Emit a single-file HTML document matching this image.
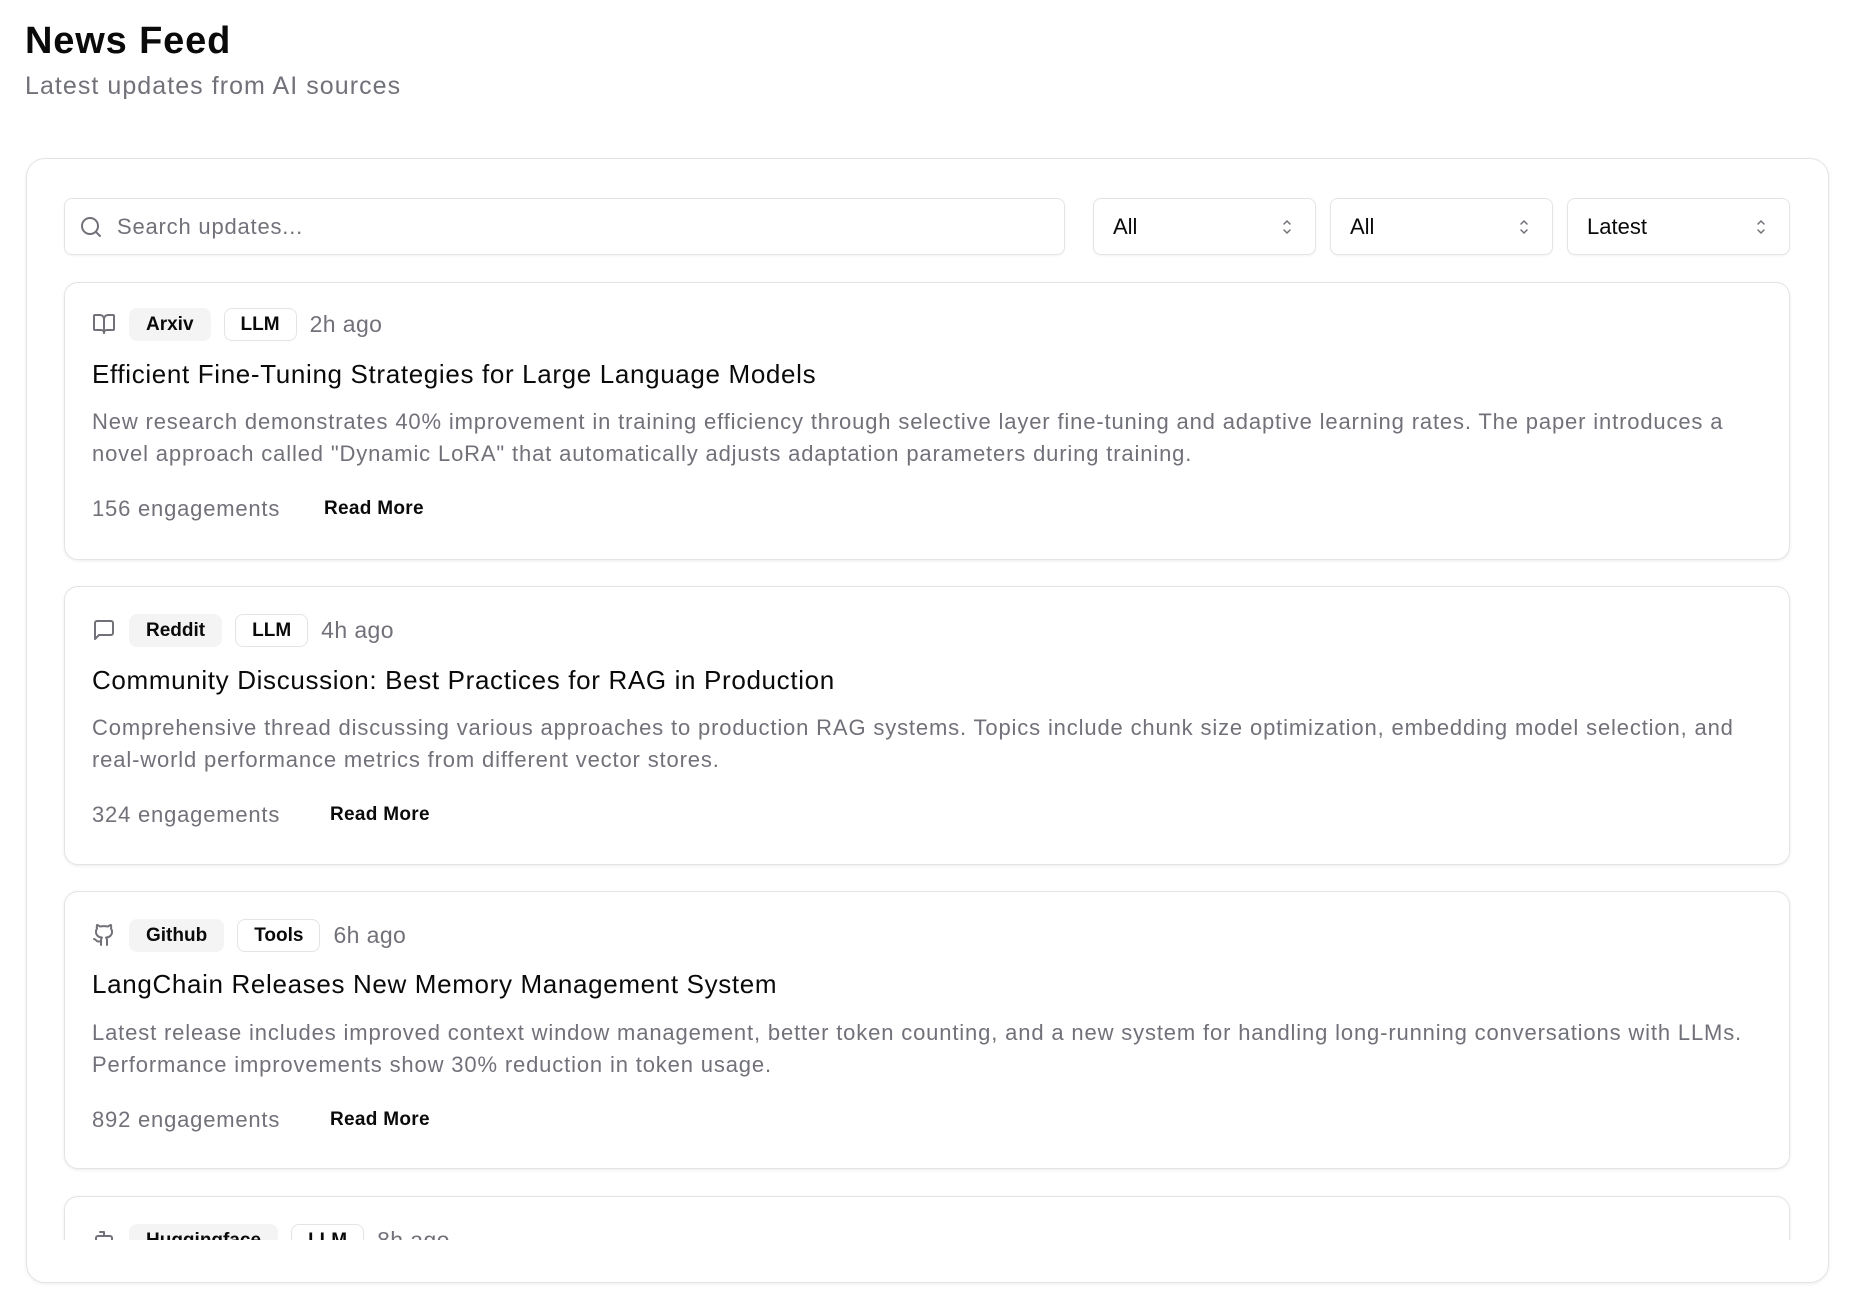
<!DOCTYPE html>
<html><head><meta charset="utf-8"><style>
*{box-sizing:border-box;margin:0;padding:0}
html,body{width:1862px;height:1316px;overflow:hidden}
body{background:#fff;font-family:"Liberation Sans",Arial,sans-serif;color:#0a0a0a;position:relative}
.h1{position:absolute;left:25px;top:19px;font-size:38px;font-weight:bold;line-height:44px;letter-spacing:0.85px}
.sub{position:absolute;left:25px;top:72px;font-size:25px;line-height:28px;color:#71717a;letter-spacing:1.05px}
.outer{position:absolute;left:26px;top:158px;width:1803px;height:1125px;border:1px solid #e4e4e7;border-radius:19px;box-shadow:0 1px 3px rgba(0,0,0,.08)}
.search{position:absolute;left:64px;top:198px;width:1001px;height:57px;border:1px solid #e4e4e7;border-radius:8px;box-shadow:0 1px 2px rgba(0,0,0,.05)}
.search svg{position:absolute;left:14px;top:16px}
.search span{position:absolute;left:52px;top:15px;font-size:22px;line-height:26px;color:#71717a;letter-spacing:0.8px}
.sel{position:absolute;top:198px;width:223px;height:57px;border:1px solid #e4e4e7;border-radius:8px;box-shadow:0 1px 2px rgba(0,0,0,.05)}
.sel span{position:absolute;left:19px;top:15px;font-size:22px;line-height:26px}
.sel svg{position:absolute;right:22px;top:19px}
.clip{position:absolute;left:60px;top:278px;width:1740px;height:962px;overflow:hidden}
.card{position:absolute;left:4px;width:1726px;height:278px;border:1px solid #e4e4e7;border-radius:14px;box-shadow:0 1px 3px rgba(0,0,0,.08);background:#fff}
.meta{position:absolute;left:27px;top:24px;height:34px;display:flex;align-items:center;white-space:nowrap}
.meta svg{margin-right:13px}
.b{height:33px;line-height:31px;padding:0 16px;border-radius:8px;font-size:19px;font-weight:bold;margin-right:13px;border:1px solid transparent}
.b1{background:#f4f4f5}
.b2{border-color:#e4e4e7}
.time{font-size:23px;color:#71717a;letter-spacing:0.4px}
.t{position:absolute;left:27px;top:76px;font-size:26px;line-height:30px;white-space:nowrap;letter-spacing:0.65px}
.d{position:absolute;left:27px;top:123px;font-size:22px;line-height:32px;color:#71717a;white-space:nowrap;letter-spacing:0.85px}
.f{position:absolute;left:27px;top:212px;font-size:22px;line-height:28px;color:#71717a;white-space:nowrap;letter-spacing:0.8px}
.rm{position:absolute;top:214px;font-size:19px;line-height:24px;font-weight:bold;white-space:nowrap;letter-spacing:0.3px}
</style></head><body>
<div class="h1">News Feed</div>
<div class="sub">Latest updates from AI sources</div>
<div class="outer"></div>
<div class="search"><svg width="24" height="24" viewBox="0 0 24 24" fill="none" stroke="#71717a" stroke-width="2" stroke-linecap="round"><circle cx="11" cy="11" r="8"/><path d="m21 21-4.3-4.3"/></svg><span>Search updates...</span></div>
<div class="sel" style="left:1093px"><span>All</span><svg width="12" height="18" viewBox="0 0 12 18" fill="none" stroke="#71717a" stroke-width="1.5" stroke-linecap="round"><path d="M3 6l3-3 3 3M3 12l3 3 3-3"/></svg></div>
<div class="sel" style="left:1330px"><span>All</span><svg width="12" height="18" viewBox="0 0 12 18" fill="none" stroke="#71717a" stroke-width="1.5" stroke-linecap="round"><path d="M3 6l3-3 3 3M3 12l3 3 3-3"/></svg></div>
<div class="sel" style="left:1567px"><span>Latest</span><svg width="12" height="18" viewBox="0 0 12 18" fill="none" stroke="#71717a" stroke-width="1.5" stroke-linecap="round"><path d="M3 6l3-3 3 3M3 12l3 3 3-3"/></svg></div>
<div class="clip">
<div class="card" style="top:4px">
<div class="meta"><svg width="24" height="24" viewBox="0 0 24 24" fill="none" stroke="#71717a" stroke-width="2" stroke-linecap="round" stroke-linejoin="round"><path d="M12 7v14"/><path d="M3 18a1 1 0 0 1-1-1V4a1 1 0 0 1 1-1h5a4 4 0 0 1 4 4 4 4 0 0 1 4-4h5a1 1 0 0 1 1 1v13a1 1 0 0 1-1 1h-6a3 3 0 0 0-3 3 3 3 0 0 0-3-3z"/></svg><span class="b b1">Arxiv</span><span class="b b2">LLM</span><span class="time">2h ago</span></div>
<div class="t">Efficient Fine-Tuning Strategies for Large Language Models</div>
<div class="d">New research demonstrates 40% improvement in training efficiency through selective layer fine-tuning and adaptive learning rates. The paper introduces a<br>novel approach called "Dynamic LoRA" that automatically adjusts adaptation parameters during training.</div>
<div class="f">156 engagements</div><div class="rm" style="left:259px">Read More</div>
</div>
<div class="card" style="top:308px;height:279px">
<div class="meta" style="top:26px"><svg width="24" height="24" viewBox="0 0 24 24" fill="none" stroke="#71717a" stroke-width="2" stroke-linecap="round" stroke-linejoin="round"><path d="M21 15a2 2 0 0 1-2 2H7l-4 4V5a2 2 0 0 1 2-2h14a2 2 0 0 1 2 2z"/></svg><span class="b b1">Reddit</span><span class="b b2">LLM</span><span class="time">4h ago</span></div>
<div class="t" style="top:78px">Community Discussion: Best Practices for RAG in Production</div>
<div class="d" style="top:125px">Comprehensive thread discussing various approaches to production RAG systems. Topics include chunk size optimization, embedding model selection, and<br>real-world performance metrics from different vector stores.</div>
<div class="f" style="top:214px">324 engagements</div><div class="rm" style="left:265px;top:216px">Read More</div>
</div>
<div class="card" style="top:613px">
<div class="meta" style="top:26px"><svg width="24" height="24" viewBox="0 0 24 24" fill="none" stroke="#71717a" stroke-width="2" stroke-linecap="round" stroke-linejoin="round"><path d="M15 22v-4a4.8 4.8 0 0 0-1-3.5c3 0 6-2 6-5.5.08-1.25-.27-2.48-1-3.5.28-1.15.28-2.350 0-3.5 0 0-1 0-3 1.5-2.640-.5-5.360-.5-8 0C6 2 5 2 5 2c-.3 1.15-.3 2.35 0 3.5A5.4 5.4 0 0 0 4 9c0 3.5 3 5.5 6 5.5-.39.49-.68 1.05-.85 1.65-.17.6-.22 1.23-.15 1.85v4"/><path d="M9 18c-4.51 2-5-2-7-2"/></svg><span class="b b1">Github</span><span class="b b2">Tools</span><span class="time">6h ago</span></div>
<div class="t" style="top:77px">LangChain Releases New Memory Management System</div>
<div class="d" style="top:125px">Latest release includes improved context window management, better token counting, and a new system for handling long-running conversations with LLMs.<br>Performance improvements show 30% reduction in token usage.</div>
<div class="f" style="top:214px">892 engagements</div><div class="rm" style="left:265px;top:216px">Read More</div>
</div>
<div class="card" style="top:918px">
<div class="meta" style="top:26px"><svg width="24" height="24" viewBox="0 0 24 24" fill="none" stroke="#71717a" stroke-width="2" stroke-linecap="round" stroke-linejoin="round"><path d="M12 8V4H8"/><rect width="16" height="12" x="4" y="8" rx="2"/><path d="M2 14h2M20 14h2M15 13v2M9 13v2"/></svg><span class="b b1">Huggingface</span><span class="b b2">LLM</span><span class="time">8h ago</span></div>
</div>
</div>
</body></html>
